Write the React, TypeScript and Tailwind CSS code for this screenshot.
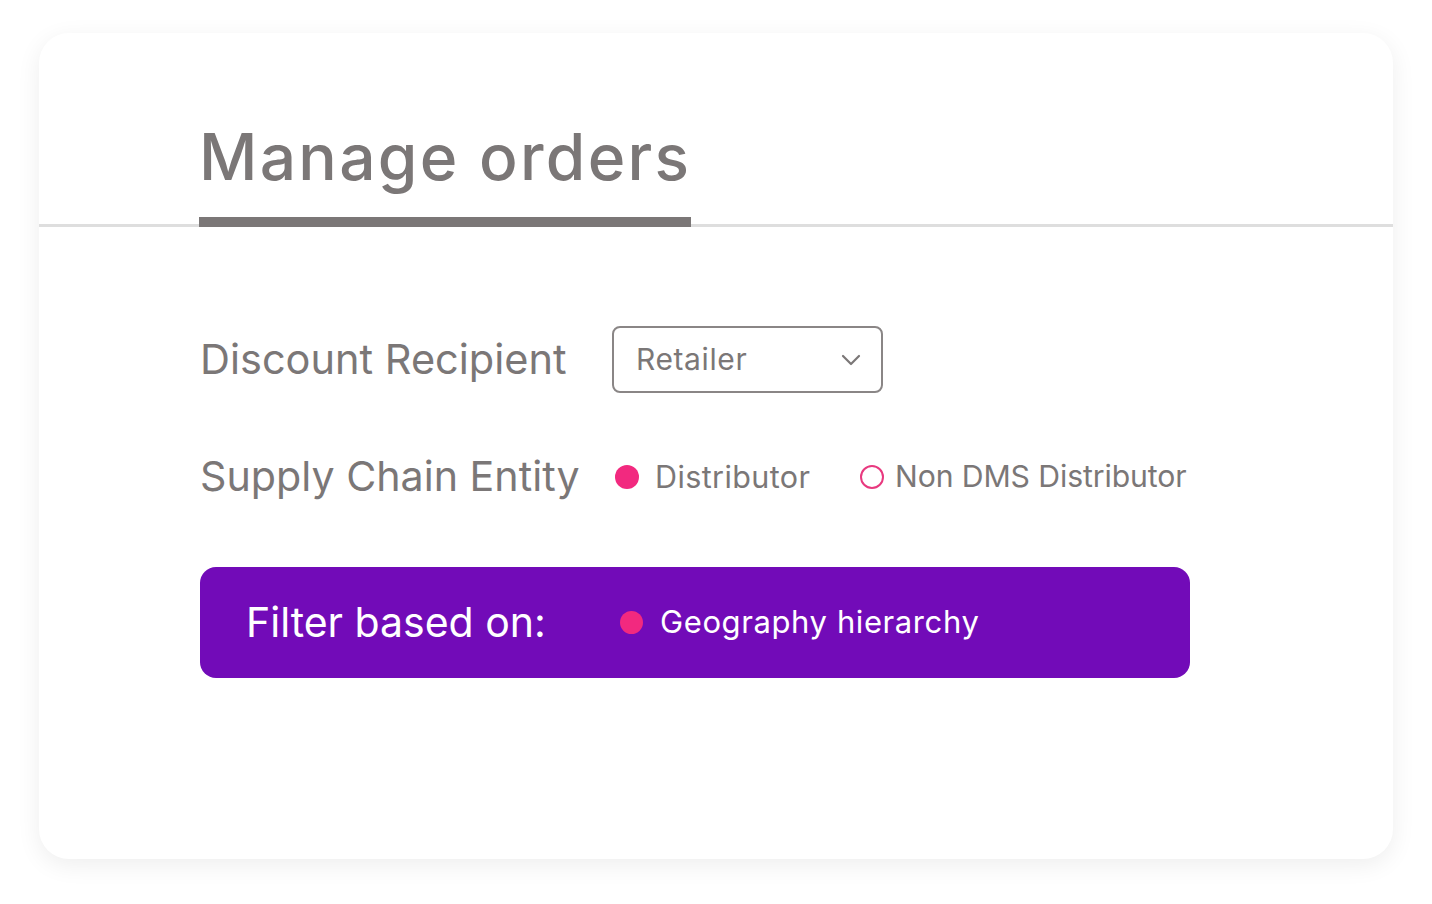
import React from "react";

export default function App() {
  const font = { fontFamily: "Inter, 'Noto Sans', sans-serif" };
  return (
    <div className="w-[1432px] h-[904px] bg-white pt-[33px] pl-[39px]" style={font}>
      <div className="w-[1354px] h-[826px] bg-white rounded-[30px] shadow-[0_6px_24px_rgba(0,0,0,0.07)] overflow-hidden">
        <div className="border-b-[3px] border-[#dedede] pl-[160px] pt-[81px]">
          <div className="inline-flex flex-col mb-[-3px]">
            <div className="text-[64px] leading-[86px] text-[#7b7777] font-medium tracking-[2.3px]">Manage orders</div>
            <div className="h-[10px] bg-[#7b7777] mt-[17px]" />
          </div>
        </div>
        <div className="pl-[161px] pt-[99px]">
          <div className="flex items-center h-[67px]">
            <div className="w-[412px] text-[41.5px] text-[#7b7777]">Discount Recipient</div>
            <div className="w-[271px] h-[67px] border-2 border-[#8a8686] rounded-[8px] flex items-center justify-between pl-[22px] pr-[20px]">
              <span className="text-[30px] tracking-[0.6px] text-[#7b7777]">Retailer</span>
              <svg width="20" height="12" viewBox="0 0 20 12" fill="none">
                <path d="M2 2 L10 10 L18 2" stroke="#7b7777" strokeWidth="2.2" strokeLinecap="round" strokeLinejoin="round" />
              </svg>
            </div>
          </div>
          <div className="flex items-center mt-[59px] h-[50px]">
            <div className="w-[415px] text-[41.2px] text-[#7b7777]">Supply Chain Entity</div>
            <div className="w-[24px] h-[24px] rounded-full bg-[#f2297f]" />
            <div className="ml-[16px] w-[205px] text-[30.5px] tracking-[0.4px] text-[#7b7777]">Distributor</div>
            <div className="w-[24px] h-[24px] rounded-full border-2 border-[#e8397f]" />
            <div className="ml-[11px] text-[30.2px] tracking-[-0.1px] text-[#7b7777]">Non DMS Distributor</div>
          </div>
          <div className="mt-[65px] w-[990px] h-[111px] bg-[#720bb8] rounded-[16px] flex items-center pl-[46px]">
            <div className="w-[374px] text-[41px] text-white">Filter based on:</div>
            <div className="w-[23px] h-[23px] rounded-full bg-[#f2297f]" />
            <div className="ml-[17px] text-[31px] tracking-[0.6px] text-white">Geography hierarchy</div>
          </div>
        </div>
      </div>
    </div>
  );
}
